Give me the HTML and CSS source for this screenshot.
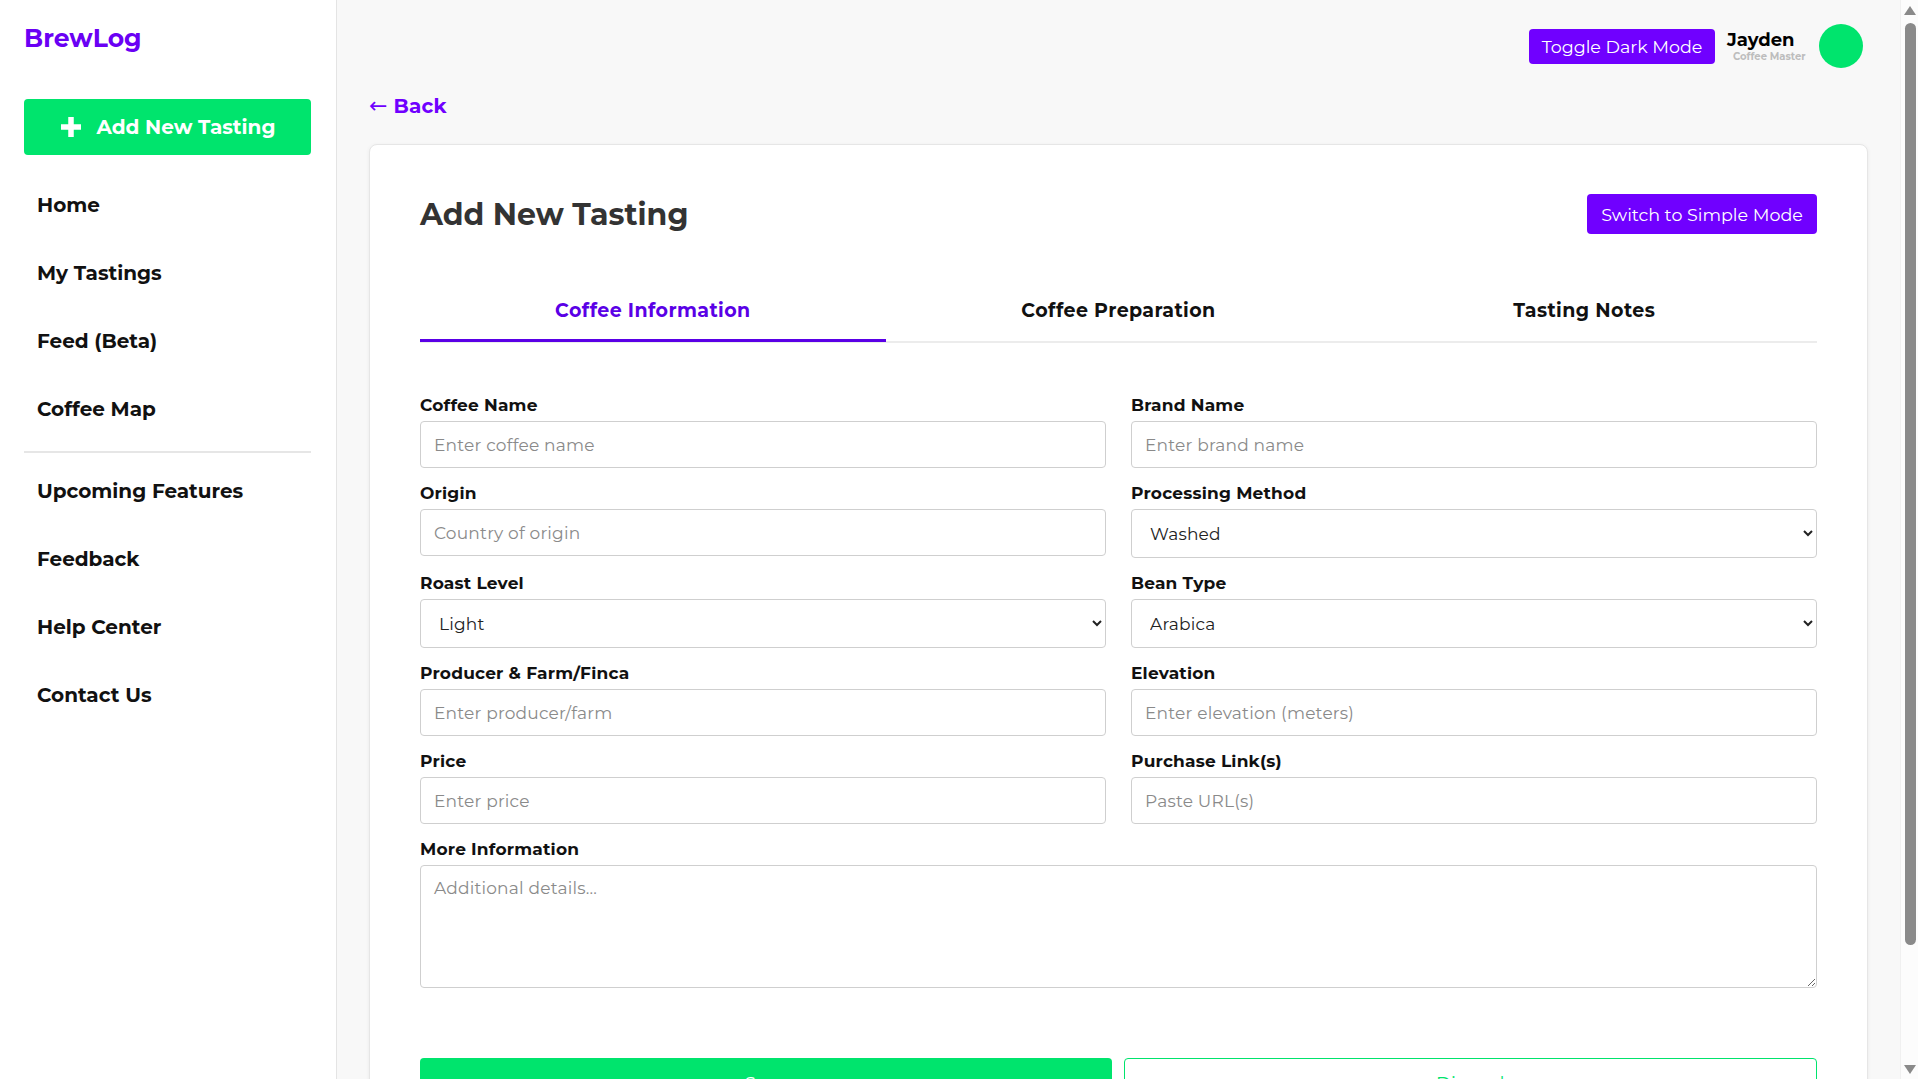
FILE: index.html
```html
<!DOCTYPE html>
<html lang="en">
<head>
<meta charset="utf-8">
<title>BrewLog - Add New Tasting</title>
<link rel="stylesheet" href="styles.css">
</head>
<body>
<div class="app">
  <aside class="sidebar">
    <div class="logo">BrewLog</div>
    <button class="add-btn" type="button">
      <svg class="plus" width="22" height="22" viewBox="0 0 22 22"><path d="M11 1v20M1 11h20" stroke="#fff" stroke-width="5.5" fill="none"/></svg>
      <span>Add New Tasting</span>
    </button>
    <nav class="nav">
      <a class="nav-item">Home</a>
      <a class="nav-item">My Tastings</a>
      <a class="nav-item">Feed (Beta)</a>
      <a class="nav-item">Coffee Map</a>
      <hr class="nav-divider">
      <a class="nav-item">Upcoming Features</a>
      <a class="nav-item">Feedback</a>
      <a class="nav-item">Help Center</a>
      <a class="nav-item">Contact Us</a>
    </nav>
  </aside>
  <main class="main">
    <header class="topbar">
      <button class="toggle-btn" type="button">Toggle Dark Mode</button>
      <div class="user">
        <div class="user-name">Jayden</div>
        <div class="user-role">Coffee Master</div>
      </div>
      <div class="avatar"></div>
    </header>
    <a class="back"><span class="arrow">←</span> Back</a>
    <section class="card">
      <div class="card-head">
        <h1 class="title">Add New Tasting</h1>
        <button class="simple-btn" type="button">Switch to Simple Mode</button>
      </div>
      <div class="tabs">
        <div class="tab active">Coffee Information</div>
        <div class="tab">Coffee Preparation</div>
        <div class="tab">Tasting Notes</div>
      </div>
      <form class="form">
        <div class="field"><label>Coffee Name</label><input type="text" placeholder="Enter coffee name"></div>
        <div class="field"><label>Brand Name</label><input type="text" placeholder="Enter brand name"></div>
        <div class="field"><label>Origin</label><input type="text" placeholder="Country of origin"></div>
        <div class="field"><label>Processing Method</label><select><option>Washed</option></select></div>
        <div class="field"><label>Roast Level</label><select><option>Light</option></select></div>
        <div class="field"><label>Bean Type</label><select><option>Arabica</option></select></div>
        <div class="field"><label>Producer &amp; Farm/Finca</label><input type="text" placeholder="Enter producer/farm"></div>
        <div class="field"><label>Elevation</label><input type="text" placeholder="Enter elevation (meters)"></div>
        <div class="field"><label>Price</label><input type="text" placeholder="Enter price"></div>
        <div class="field"><label>Purchase Link(s)</label><input type="text" placeholder="Paste URL(s)"></div>
        <div class="field full"><label>More Information</label><textarea placeholder="Additional details..."></textarea></div>
      </form>
      <div class="actions">
        <button class="save-btn" type="button">Save</button>
        <button class="discard-btn" type="button">Discard</button>
      </div>
    </section>
  </main>
</div>
<div class="scrollbar" aria-hidden="true">
  <div class="sb-up"></div>
  <div class="sb-thumb"></div>
  <div class="sb-down"></div>
</div>
</body>
</html>
```

FILE: styles.css
```css
* { box-sizing: border-box; }
html, body { margin: 0; padding: 0; }
body {
  font-family: "Montserrat", "Inter", "Noto Sans", sans-serif;
  background: #f8f8f8;
  color: #111;
}
.app { display: flex; min-height: 100vh; }

.sidebar {
  width: 337px;
  flex: 0 0 337px;
  background: #fff;
  border-right: 1px solid #e4e4e4;
  padding: 23px 25px 40px 24px;
}
.logo {
  font-size: 25px;
  line-height: 30px;
  font-weight: 700;
  color: #6a00f4;
}
.add-btn {
  margin-top: 46px;
  width: 287px;
  height: 56px;
  border: 0;
  border-radius: 4px;
  background: #00e46d;
  color: #fff;
  font-family: inherit;
  font-size: 20px;
  font-weight: 700;
  display: flex;
  align-items: center;
  justify-content: center;
  gap: 15px;
  padding: 0;
}
.plus { display: block; }
.nav { margin-top: 16px; display: flex; flex-direction: column; }
.nav-item {
  display: block;
  height: 68px;
  line-height: 68px;
  padding-left: 13px;
  font-size: 20px;
  font-weight: 700;
  color: #111;
}
.nav-divider {
  border: 0;
  border-top: 2px solid #e6e6e6;
  margin: 8px 0 4px;
  height: 0;
}

.main { flex: 1; padding: 0 50px 40px 32px; min-width: 0; }
.topbar {
  display: flex;
  align-items: center;
  justify-content: flex-end;
  padding-top: 24px;
  height: 68px;
  padding-right: 5px;
}
.toggle-btn {
  background: #7000ff;
  color: #fff;
  border: 0;
  border-radius: 4px;
  height: 35px;
  width: 186px;
  font-family: inherit;
  font-size: 17.5px;
  padding: 0;
}
.user { margin-left: 12px; width: 80px; }
.user-name { font-size: 18px; font-weight: 700; line-height: 20px; color: #000; }
.user-role { font-size: 10px; font-weight: 700; color: #bdbdbd; line-height: 12px; padding-left: 6px; margin-top: 1px; }
.avatar {
  width: 44px; height: 44px; border-radius: 50%;
  background: #00e46d;
  margin-left: 12px;
}
.back {
  display: inline-block;
  margin-top: 25px;
  font-size: 20px;
  line-height: 26px;
  font-weight: 700;
  color: #7000ff;
  letter-spacing: 0.2px;
}
.back .arrow { font-family: "DejaVu Sans", sans-serif; font-weight: 400; font-size: 22px; }

.card {
  margin-top: 25px;
  background: #fff;
  border: 1px solid #e6e6e6;
  border-radius: 8px;
  box-shadow: 0 1px 4px rgba(0,0,0,0.06);
  padding: 49px 50px 50px;
}
.card-head { display: flex; align-items: center; justify-content: space-between; height: 40px; }
.title { margin: 0; font-size: 30px; font-weight: 700; color: #333; }
.simple-btn {
  background: #7000ff; color: #fff; border: 0; border-radius: 4px;
  height: 40px; width: 230px; font-family: inherit; font-size: 17.5px; padding: 0;
}
.tabs {
  margin-top: 51px;
  display: grid;
  grid-template-columns: 1fr 1fr 1fr;
  border-bottom: 2px solid #ececec;
}
.tab {
  text-align: center;
  font-size: 19px;
  font-weight: 700;
  letter-spacing: 0.4px;
  line-height: 24px;
  padding: 14px 0 16px;
  border-bottom: 3px solid transparent;
  margin-bottom: -1px;
  color: #111;
}
.tab.active { color: #5a00e6; border-bottom-color: #5a00e6; }

.form {
  margin-top: 52px;
  display: grid;
  grid-template-columns: 1fr 1fr;
  column-gap: 25px;
  row-gap: 15px;
}
.field { display: flex; flex-direction: column; gap: 6px; }
.field.full { grid-column: 1 / -1; }
.field label { font-size: 17px; font-weight: 700; line-height: 20px; color: #111; letter-spacing: 0.2px; }
.field input, .field select, .field textarea {
  font-family: inherit;
  font-size: 17px;
  letter-spacing: 0.2px;
  color: #222;
  border: 1px solid #cfcfcf;
  border-radius: 4px;
  background: #fff;
  width: 100%;
}
.field input { height: 47px; padding: 0 13px; }
.field select { height: 49px; padding: 0 14px; }
.field textarea { height: 123px; padding: 12px 13px; resize: vertical; }
.field input::placeholder, .field textarea::placeholder { color: #8a8a8a; }

.actions { margin-top: 70px; display: flex; gap: 12px; }
.save-btn, .discard-btn {
  flex: 1; height: 52px; border-radius: 4px; font-family: inherit; font-size: 18px;
}
.save-btn { background: #00e46d; color: #fff; border: 0; }
.discard-btn { background: #fff; color: #00e46d; border: 1px solid #00e46d; }

.scrollbar {
  position: fixed;
  top: 0;
  right: 0;
  width: 18px;
  height: 100vh;
  background: #fcfcfc;
  border-left: 1px solid #f0f0f0;
}
.sb-up, .sb-down {
  position: absolute;
  left: 3px;
  width: 0; height: 0;
  border-left: 6px solid transparent;
  border-right: 6px solid transparent;
}
.sb-up { top: 6px; border-bottom: 9px solid #8a8a8a; }
.sb-down { bottom: 5px; border-top: 9px solid #8a8a8a; }
.sb-thumb {
  position: absolute;
  top: 23px;
  left: 4px;
  width: 11px;
  height: 922px;
  border-radius: 6px;
  background: #8a8a8a;
}
```
